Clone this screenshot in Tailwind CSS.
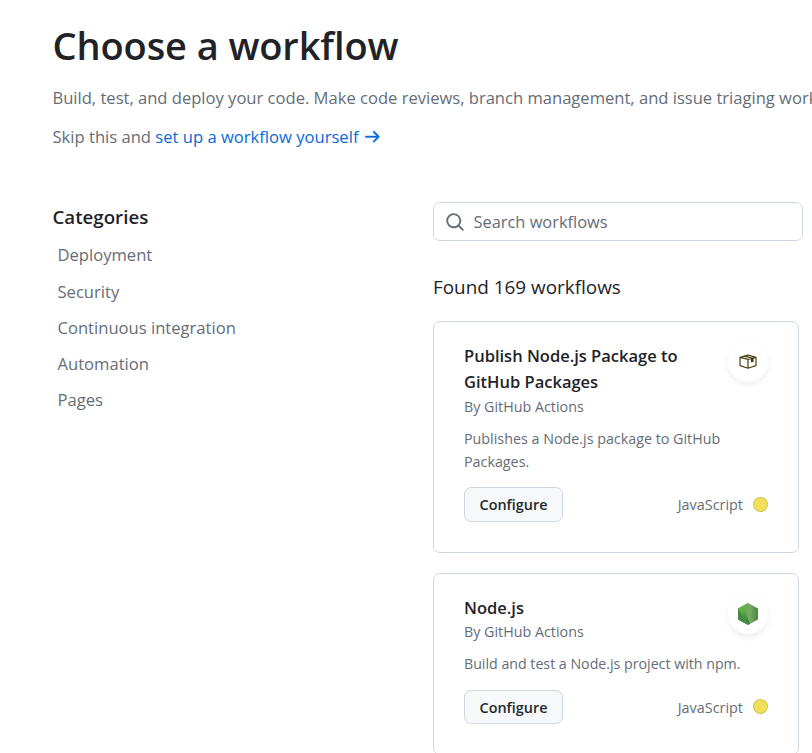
<!DOCTYPE html>
<html lang="en">
<head>
<meta charset="utf-8">
<title>Choose a workflow</title>
<script src="https://cdn.jsdelivr.net/npm/@tailwindcss/browser@4"></script>
</head>
<body class="bg-white font-['Open_Sans','Noto_Sans',sans-serif] text-[#656d76] h-[753px] overflow-hidden">
<div class="pl-[52.500px] pt-5 h-full overflow-hidden">
  <header class="whitespace-nowrap text-[16.6px] leading-[26px]">
    <h1 class="text-[38px] leading-[50px] font-semibold tracking-[-0.1px] text-[#1f2328]">Choose a workflow</h1>
    <p class="mt-[15px] tracking-[-0.015px]">Build, test, and deploy your code. Make code reviews, branch management, and issue triaging work the way you want.</p>
    <p class="mt-[13px] flex items-center"><span>Skip this and <a href="#" class="text-[#0969da]">set up a workflow yourself</a></span>
      <svg class="ml-[6px] w-[18px] h-[18px]" viewBox="0 0 16 16" fill="#0969da" stroke="#0969da" stroke-width=".3"><path d="M8.22 2.97a.75.75 0 0 1 1.06 0l4.25 4.25a.75.75 0 0 1 0 1.06l-4.25 4.25a.75.75 0 0 1-1.06-1.06l2.97-2.97H1.75a.75.75 0 0 1 0-1.5h9.44L8.22 4.03a.75.75 0 0 1 0-1.06Z"/></svg>
    </p>
  </header>
  <div class="flex mt-[52px]">
    <nav class="w-[380.500px] shrink-0 pt-px">
      <h2 class="text-[18.7px] leading-7 font-semibold text-[#1f2328]">Categories</h2>
      <ul class="mt-[6px] pl-[5px] text-[16.6px] leading-9">
        <li>Deployment</li>
        <li class="pt-px">Security</li>
        <li>Continuous integration</li>
        <li>Automation</li>
        <li>Pages</li>
      </ul>
    </nav>
    <main class="w-[370px] shrink-0">
      <label class="flex items-center h-[39px] rounded-[7px] border border-[#d0d7de] pl-[11px] text-[16.4px]">
        <svg class="w-5 h-5" viewBox="0 0 16 16" fill="#656d76"><path d="M10.68 11.74a6 6 0 0 1-7.922-8.982 6 6 0 0 1 8.982 7.922l3.04 3.04a.749.749 0 1 1-1.06 1.06ZM11.5 7a4.499 4.499 0 1 0-8.997 0A4.499 4.499 0 0 0 11.5 7Z"/></svg>
        <span class="ml-[8.500px] pt-[2px]">Search workflows</span>
      </label>
      <h3 class="mt-[31px] text-[18.9px] leading-[30px] text-[#1f2328]">Found 169 workflows</h3>

      <article class="mt-[19px] w-[366px] h-[232px] rounded-[7px] border border-[#d0d7de] px-[30px] pt-[20px]">
        <div class="flex justify-between">
          <div class="pt-px">
            <h4 class="w-[230px] text-[16.5px] leading-[26px] font-semibold text-[#1f2328]">Publish Node.js Package to GitHub Packages</h4>
            <p class="pt-px text-[14.3px] leading-[22px]">By GitHub Actions</p>
          </div>
          <div class="flex items-center justify-center w-10 h-10 rounded-full bg-white shadow-[0_3px_6px_rgba(140,149,159,0.15)]">
            <svg class="w-[18px] h-[16px]" viewBox="0 0 18 16" fill="none" stroke="#4d4215" stroke-width="1.2" stroke-linejoin="round"><path d="M1 3.400 9 1.200l8 2.200v8.200L9 14.200 1 11.600ZM1 3.400l8 2 8-2M9 5.400v8.800M5 2.200l8 2"/><path d="M12 4.300v4.200l1.200-.8 1.300.8V3.700Z" fill="#3b3208" stroke="none"/></svg>
          </div>
        </div>
        <p class="mt-[9px] w-[290px] text-[14.3px] leading-[23px]">Publishes a Node.js package to GitHub Packages.</p>
        <div class="mt-[14px] flex items-center justify-between">
          <button class="w-[99px] h-[35px] rounded-[7px] border border-[#d0d7de] bg-[#f6f8fa] text-[14.4px] font-semibold text-[#24292f]">Configure</button>
          <span class="flex items-center text-[14.4px]">JavaScript<i class="ml-[10px] w-[15px] h-[15px] rounded-full bg-[#f1e05a] border border-[#1f2328]/15"></i></span>
        </div>
      </article>

      <article class="mt-5 w-[366px] h-[182px] rounded-[7px] border border-[#d0d7de] px-[30px] pt-[20px]">
        <div class="flex justify-between">
          <div class="pt-px">
            <h4 class="text-[16.5px] leading-[26px] font-semibold text-[#1f2328]">Node.js</h4>
            <p class="text-[14.3px] leading-[22px]">By GitHub Actions</p>
          </div>
          <div class="flex items-center justify-center w-10 h-10 -mb-2 rounded-full bg-white shadow-[0_3px_6px_rgba(140,149,159,0.15)]">
            <svg class="w-5 h-[22px]" viewBox="0 0 20 22">
              <defs>
                <linearGradient id="face" x1="0" y1="0" x2="1" y2="0"><stop offset="0" stop-color="#41873f"/><stop offset=".35" stop-color="#5fae48"/><stop offset=".6" stop-color="#7aa968"/><stop offset="1" stop-color="#3f8b3d"/></linearGradient>
                <linearGradient id="edge" x1="0" y1="0" x2=".4" y2="1"><stop offset="0" stop-color="#76c14c"/><stop offset=".5" stop-color="#58a845"/><stop offset="1" stop-color="#3a8640"/></linearGradient>
              </defs>
              <path d="M10 0 20 5.500v11L10 22 0 16.500v-11Z" fill="url(#face)"/>
              <path d="M10 0 0 5.500 9.500 21.700 12 20.900 6 6Z" fill="url(#edge)"/>
              <path d="M0 5.500v11L9.500 21.700Z" fill="#438a42"/>
            </svg>
          </div>
        </div>
        <p class="mt-[9px] text-[14.2px] leading-[23px] whitespace-nowrap">Build and test a Node.js project with npm.</p>
        <div class="mt-[15px] flex items-center justify-between">
          <button class="w-[99px] h-[34px] rounded-[7px] border border-[#d0d7de] bg-[#f6f8fa] pt-px text-[14.4px] font-semibold text-[#24292f]">Configure</button>
          <span class="flex items-center text-[14.4px]"><span class="pt-px">JavaScript</span><i class="ml-[10px] w-[15px] h-[15px] rounded-full bg-[#f1e05a] border border-[#1f2328]/15"></i></span>
        </div>
      </article>
    </main>
  </div>
</div>
</body>
</html>
